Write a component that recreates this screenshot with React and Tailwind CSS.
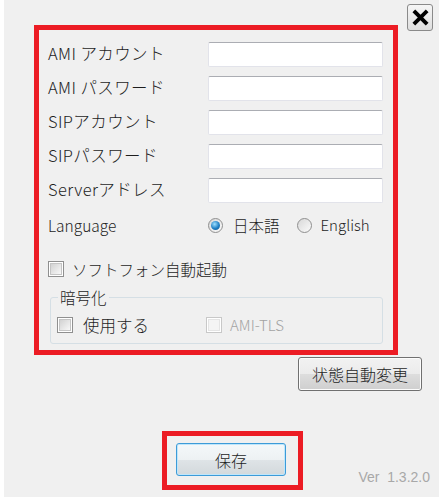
import React from 'react';

const JP = { fontFamily: '"Noto Sans CJK JP", "Noto Sans", sans-serif' };

function TextBox() {
    return (
        <input
            type="text"
            className="h-[25px] w-[175px] rounded-[2px] border border-[#e2e3ea] border-t-[#abadb3] bg-white outline-none"
        />
    );
}

function CheckBox({ disabled }) {
    return (
        <span
            className={`flex h-[16px] w-[16px] shrink-0 items-center justify-center border bg-white ${disabled ? 'border-[#c8c8c8]' : 'border-[#8f8f8f]'}`}
        >
            <span
                className={`h-[12px] w-[12px] border ${disabled ? 'border-[#e4e4e4] bg-[#f4f4f4]' : 'border-[#c4c4c4] bg-[linear-gradient(135deg,#d2d2d2,#f8f8f8)]'}`}
            />
        </span>
    );
}

function Radio({ checked }) {
    return (
        <span className="flex h-[15px] w-[15px] shrink-0 items-center justify-center rounded-full border border-[#8f8f8f] bg-[linear-gradient(135deg,#d8d8d8,#fbfbfb)]">
            {checked && (
                <span className="h-[9px] w-[9px] rounded-full bg-[radial-gradient(circle_at_40%_35%,#9fe0ff,#1f7fc4_55%,#0b4f8a)]" />
            )}
        </span>
    );
}

const FIELDS = ['AMI アカウント', 'AMI パスワード', 'SIPアカウント', 'SIPパスワード', 'Serverアドレス'];

export default function App() {
    return (
        <div className="h-[499px] w-[440px] bg-white font-light text-[#1e1e1e]" style={JP}>
            <div className="ml-[4px] flex h-[497px] w-[435px] flex-col bg-[#f0f0f0]">
                {/* settings frame + close */}
                <div className="flex items-start">
                    <div className="ml-[30px] mt-[25px] flex h-[330px] w-[364px] flex-col border-[5px] border-[#ec1c24] pl-[9px] pt-[12px]">
                        <div className="flex flex-col gap-[9px]">
                            {FIELDS.map((label) => (
                                <div key={label} className="flex h-[25px] items-center">
                                    <span className="mb-[3px] w-[160px] text-[16.5px] leading-[20px] tracking-[0.4px]">{label}</span>
                                    <TextBox />
                                </div>
                            ))}
                        </div>

                        <div className="mt-[10px] flex h-[24px] items-center text-[15px] leading-[20px]">
                            <span className="w-[160px] text-[15.5px]">Language</span>
                            <Radio checked />
                            <span className="ml-[10px] text-[15.5px]">日本語</span>
                            <span className="ml-[17px]"><Radio /></span>
                            <span className="ml-[9px]">English</span>
                        </div>

                        <div className="mt-[22px] flex h-[20px] items-center">
                            <CheckBox />
                            <span className="ml-[8px] text-[15.5px] leading-[20px]">ソフトフォン自動起動</span>
                        </div>

                        <fieldset className="ml-[2px] mt-[8px] w-[333px] rounded-[3px] border border-[#d5dfe5] pb-[8px] pl-[6px] pt-[8px]">
                            <legend className="ml-[1px] px-[2px] text-[15.5px] leading-[20px]">暗号化</legend>
                            <div className="flex h-[20px] items-center">
                                <CheckBox />
                                <span className="ml-[10px] text-[16.5px] leading-[20px]">使用する</span>
                                <span className="ml-[57px]"><CheckBox disabled /></span>
                                <span className="ml-[8px] text-[15px] leading-[20px] text-[#a3a3a3]">AMI-TLS</span>
                            </div>
                        </fieldset>
                    </div>

                    <button className="ml-[9px] mt-[4px] flex h-[27px] w-[26px] items-center justify-center rounded-[3px] border border-[#8a8a8a] bg-[linear-gradient(#f6f6f6,#dedede)]">
                        <svg width="17" height="17" viewBox="0 0 16 16">
                            <path d="M3 3L13 13M13 3L3 13" stroke="#000" strokeWidth="3.6" strokeLinecap="square" />
                        </svg>
                    </button>
                </div>

                {/* status auto change */}
                <div className="mt-[2px] flex justify-end pr-[17px]">
                    <button className="flex h-[34px] w-[124px] items-center justify-center rounded-[3px] border border-[#707070] bg-[linear-gradient(#f2f2f2_0%,#ebebeb_50%,#dddddd_50%,#cfcfcf_100%)] text-[16px] leading-[20px] shadow-[inset_0_0_0_1px_#fcfcfc]">
                        状態自動変更
                    </button>
                </div>

                {/* save + version */}
                <div className="mt-[40px] flex items-start">
                    <div className="ml-[158px] h-[59px] w-[141px] border-[5px] border-[#ec1c24] pl-[9px] pt-[7px]">
                        <button className="flex h-[33px] w-[110px] items-center justify-center rounded-[3px] border border-[#3c9bd8] bg-[linear-gradient(#f4f8fa_0%,#edf1f3_50%,#dfe4e7_50%,#d3d9dc_100%)] text-[16px] leading-[20px] shadow-[inset_0_0_0_1px_#bfe6fb]">
                            保存
                        </button>
                    </div>
                    <span
                        className="ml-auto mr-[9px] mt-[38px] text-[14px] leading-[16px] text-[#a8a8a8]"
                        style={{ fontFamily: '"Liberation Sans", sans-serif' }}
                    >
                        Ver&nbsp; 1.3.2.0
                    </span>
                </div>
            </div>
        </div>
    );
}
